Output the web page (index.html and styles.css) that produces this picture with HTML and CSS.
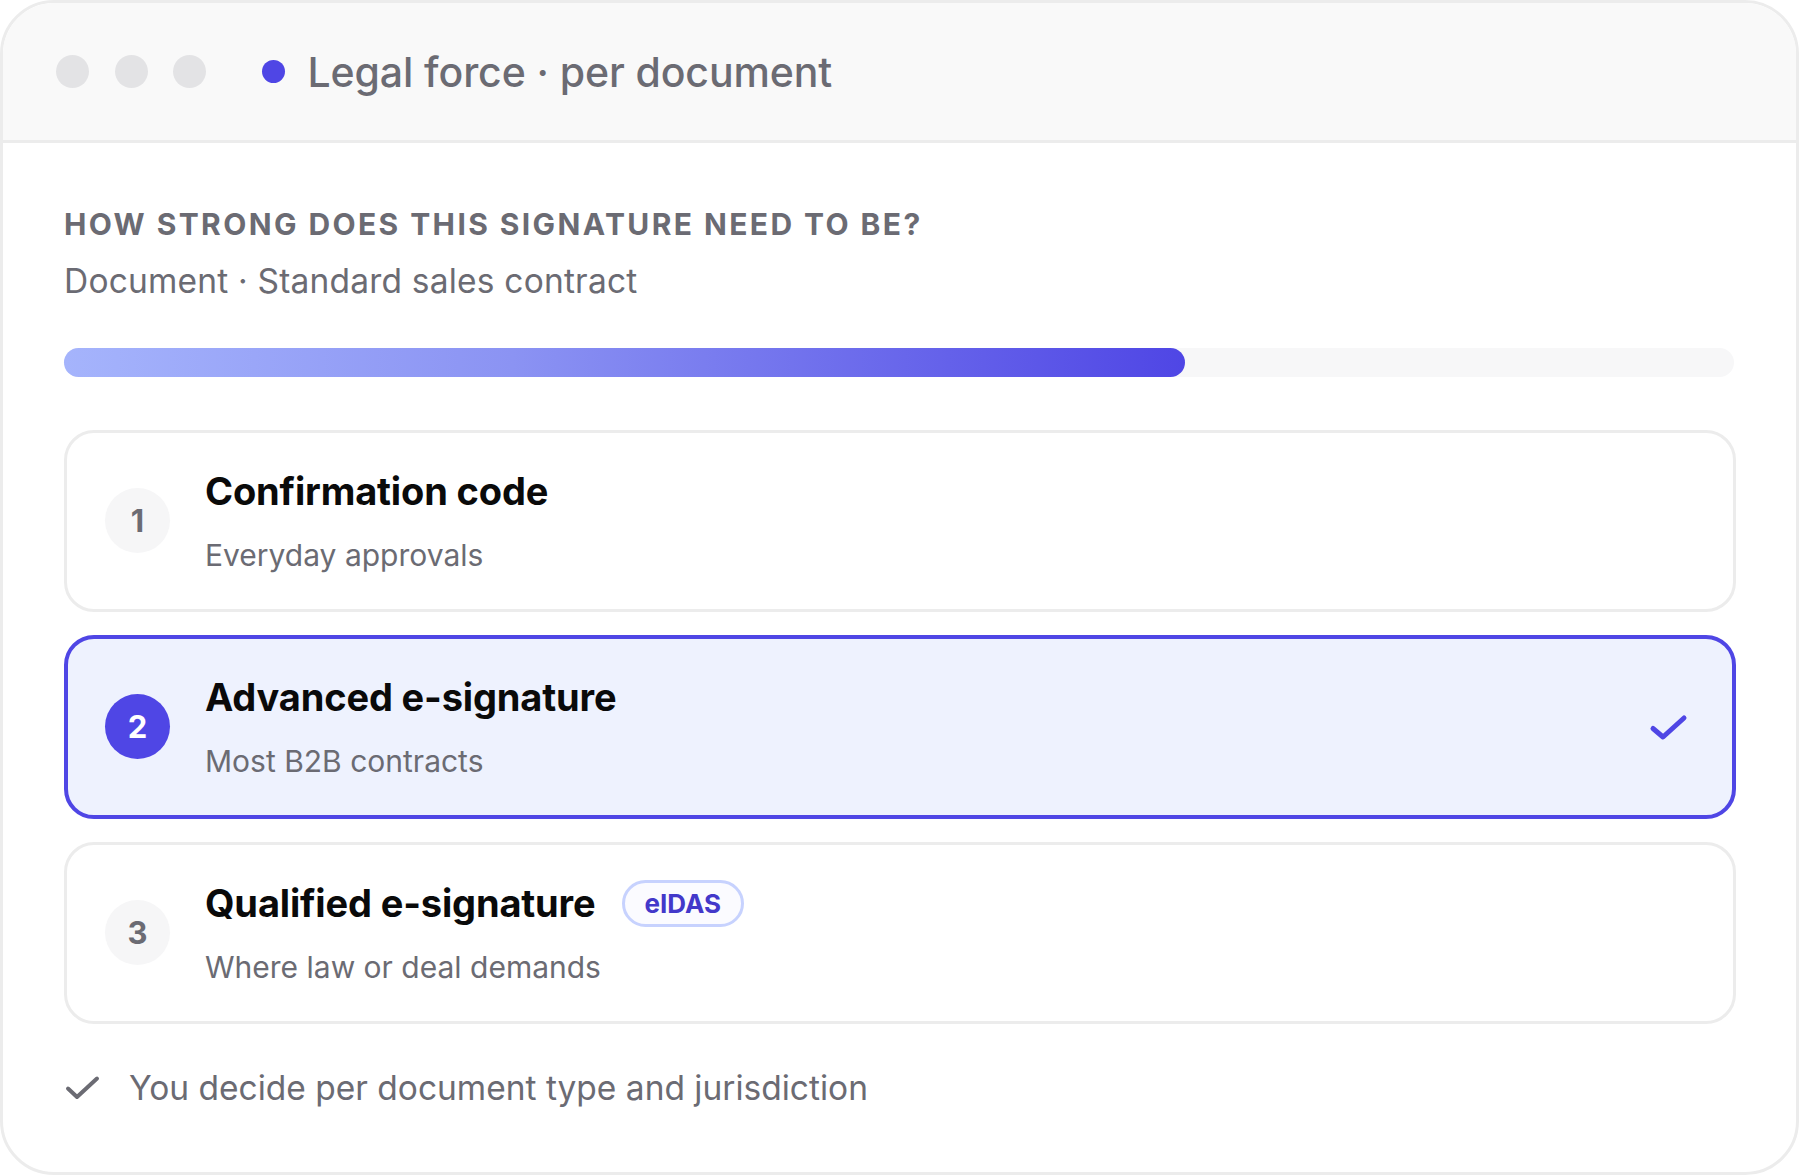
FILE: index.html
```html
<!DOCTYPE html>
<html lang="en">
<head>
<meta charset="utf-8">
<title>Legal force · per document</title>
<link rel="stylesheet" href="styles.css">
</head>
<body>
<div class="window">
  <header class="titlebar">
    <span class="dot"></span>
    <span class="dot"></span>
    <span class="dot"></span>
    <span class="live"></span>
    <span class="title">Legal force · per document</span>
  </header>
  <main class="content">
    <h1 class="eyebrow">HOW STRONG DOES THIS SIGNATURE NEED TO BE?</h1>
    <p class="doc">Document · Standard sales contract</p>
    <div class="track"><div class="fill" style="width:67.1%"></div></div>
    <div class="options">
      <div class="card">
        <div class="num">1</div>
        <div class="text">
          <div class="name">Confirmation code</div>
          <div class="desc">Everyday approvals</div>
        </div>
      </div>
      <div class="card selected">
        <div class="num">2</div>
        <div class="text">
          <div class="name">Advanced e-signature</div>
          <div class="desc">Most B2B contracts</div>
        </div>
        <svg class="tick" width="40" height="32" viewBox="0 0 40 32" aria-hidden="true">
          <path d="M4 17.5 L14 26 L35 7" fill="none" stroke="#4f46e5" stroke-width="5" stroke-linecap="round" stroke-linejoin="round"/>
        </svg>
      </div>
      <div class="card">
        <div class="num">3</div>
        <div class="text">
          <div class="name-row">
            <span class="name">Qualified e-signature</span>
            <span class="badge">eIDAS</span>
          </div>
          <div class="desc">Where law or deal demands</div>
        </div>
      </div>
    </div>
    <div class="note">
      <svg class="note-tick" width="35" height="26" viewBox="0 0 35 26" aria-hidden="true">
        <path d="M3 13.5 L12 22 L32 3.5" fill="none" stroke="#6b6b73" stroke-width="4" stroke-linecap="round" stroke-linejoin="round"/>
      </svg>
      <span>You decide per document type and jurisdiction</span>
    </div>
  </main>
</div>
</body>
</html>
```

FILE: styles.css
```css
html, body {
  margin: 0;
  padding: 0;
  background: #ffffff;
}

body {
  font-family: Inter, "Noto Sans", "Liberation Sans", sans-serif;
  color: #6b6b73;
}

.window {
  box-sizing: border-box;
  width: 100vw;
  height: 100vh;
  border: 3px solid #ececec;
  border-radius: 54px;
  overflow: hidden;
  background: #ffffff;
}

.titlebar {
  height: 137px;
  background: #f9f9f9;
  border-bottom: 3px solid #ececec;
  display: flex;
  align-items: center;
  padding-left: 53px;
}

.dot {
  width: 33px;
  height: 33px;
  border-radius: 50%;
  background: #e3e3e5;
  margin-right: 25.5px;
}

.dot:nth-of-type(3) {
  margin-right: 55.5px;
}

.live {
  width: 23px;
  height: 23px;
  border-radius: 50%;
  background: #4f46e5;
  margin-right: 23px;
}

.title {
  font-size: 41px;
  font-weight: 500;
  color: #6b6b73;
  line-height: 50px;
  letter-spacing: -0.1px;
}

.content {
  padding: 62.5px 60px 0 61px;
}

.eyebrow {
  margin: 0;
  font-size: 30px;
  line-height: 36px;
  font-weight: 700;
  letter-spacing: 2.4px;
  color: #6b6b73;
}

.doc {
  margin: 19.5px 0 0;
  font-size: 33.5px;
  line-height: 40px;
  color: #6b6b73;
  letter-spacing: 0.2px;
}

.track {
  margin-top: 47px;
  height: 29px;
  border-radius: 15px;
  background: #f7f7f8;
  margin-right: 2px;
}

.fill {
  height: 100%;
  border-radius: 15px;
  background: linear-gradient(90deg, #a5b4fc 0%, #8b93f3 40%, #4f46e5 100%);
}

.options {
  margin-top: 53px;
  display: flex;
  flex-direction: column;
  gap: 23.5px;
}

.card {
  display: flex;
  align-items: center;
  gap: 35px;
  border: 3px solid #ececec;
  border-radius: 30px;
  padding: 35px 44px 35px 38px;
  background: #ffffff;
}

.card.selected {
  border: 4px solid #4f46e5;
  background: #eef2fe;
  padding: 35px 43px 35px 37px;
}

.num {
  width: 65px;
  height: 65px;
  flex: none;
  border-radius: 50%;
  background: #f6f6f7;
  color: #6b6b73;
  font-size: 31px;
  font-weight: 700;
  display: flex;
  align-items: center;
  justify-content: center;
}

.selected .num {
  background: #4f46e5;
  color: #ffffff;
}

.text {
  display: flex;
  flex-direction: column;
  gap: 21.5px;
}

.name {
  font-size: 38px;
  line-height: 46px;
  font-weight: 700;
  color: #0a0a0a;
  letter-spacing: -0.15px;
}

.name-row {
  display: flex;
  align-items: center;
  gap: 26px;
  height: 46px;
}

.badge {
  box-sizing: border-box;
  height: 47px;
  padding: 0 20px;
  border: 3px solid #c7d2fe;
  border-radius: 24px;
  background: #fbfbff;
  color: #4338ca;
  font-size: 26px;
  font-weight: 700;
  display: flex;
  align-items: center;
}

.desc {
  font-size: 30px;
  line-height: 38px;
  color: #6b6b73;
}

.tick {
  margin-left: auto;
  flex: none;
}

.note {
  margin-top: 44px;
  display: flex;
  align-items: center;
  gap: 29px;
  font-size: 33.5px;
  line-height: 40px;
  color: #6b6b73;
  padding-left: 1px;
}

.note-tick {
  flex: none;
}
```
